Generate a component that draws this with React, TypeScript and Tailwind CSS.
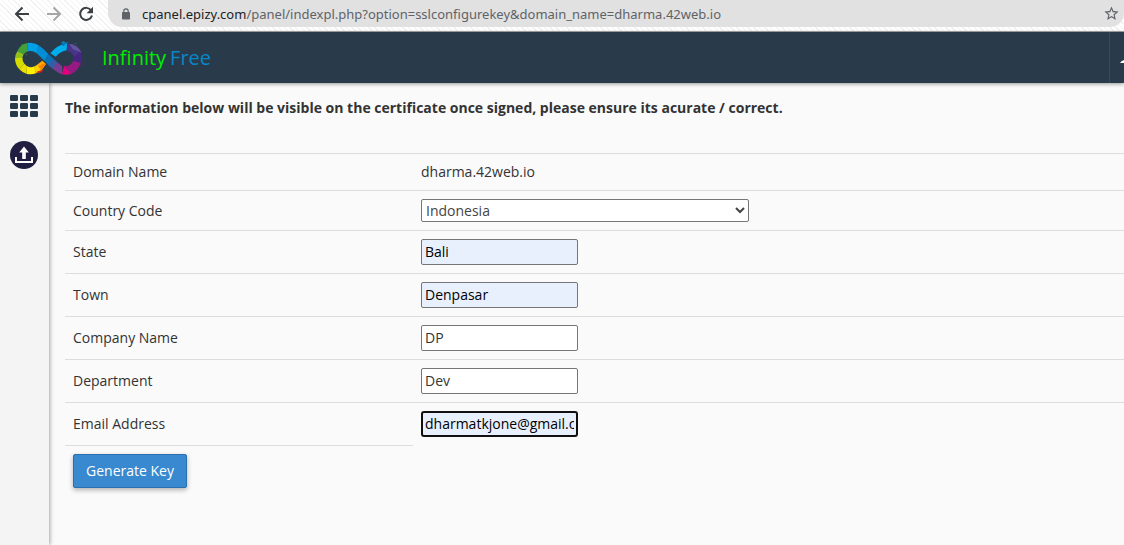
import type { ReactNode } from "react";

const cell = "border-t border-[#dddddd] p-2 font-normal text-left";

const inputBase =
  "block h-[26px] w-[157px] pb-0.5 text-sm outline-none";

const plain = "rounded-[2px] border border-[#767676] px-[3px]";

type Field = {
  id: string;
  label: string;
  value: string;
  look: string;
};

const fields: Field[] = [
  { id: "state", label: "State", value: "Bali", look: `${plain} bg-[#e8f0fe] text-black` },
  { id: "town", label: "Town", value: "Denpasar", look: `${plain} bg-[#e8f0fe] text-black` },
  { id: "company", label: "Company Name", value: "DP", look: `${plain} bg-white text-[#333333]` },
  { id: "department", label: "Department", value: "Dev", look: `${plain} bg-white text-[#333333]` },
  {
    id: "email",
    label: "Email Address",
    value: "dharmatkjone@gmail.com",
    look: "rounded-[3px] border-2 border-[#101010] bg-[#e8f0fe] px-0.5 text-black",
  },
];

function BackArrow() {
  return (
    <svg viewBox="0 0 16 16" className="size-4" fill="none" stroke="currentColor" strokeWidth="2">
      <path d="M15 8H2.5M8.5 1.5L2 8l6.500 6.500" />
    </svg>
  );
}

function ForwardArrow() {
  return (
    <svg viewBox="0 0 16 16" className="size-4" fill="none" stroke="currentColor" strokeWidth="2">
      <path d="M1 8h12.500M7.500 1.500L14 8l-6.500 6.500" />
    </svg>
  );
}

function ReloadIcon() {
  return (
    <svg viewBox="0 0 16 16" className="size-4" fill="none" stroke="currentColor" strokeWidth="2">
      <path d="M13.200 4.500A6 6 0 1 0 14 9.500" />
      <path d="M15 0.800v6.400H8.600z" fill="currentColor" stroke="none" />
    </svg>
  );
}

function LockIcon() {
  return (
    <svg viewBox="0 0 8 12" className="h-3 w-2" fill="none">
      <rect x="0" y="4" width="8" height="7.500" rx="0.800" fill="#5f6368" />
      <path d="M1.800 4.500V3a2.200 2.200 0 0 1 4.400 0v1.500" stroke="#5f6368" strokeWidth="1.200" />
    </svg>
  );
}

function StarIcon() {
  return (
    <svg viewBox="0 0 24 24" className="size-[17px]" fill="#5f6368">
      <path d="M22 9.240l-7.190-.620L12 2 9.190 8.630 2 9.240l5.460 4.730L5.820 21 12 17.270 18.180 21l-1.630-7.030L22 9.240zM12 15.400l-3.760 2.270 1-4.280-3.320-2.880 4.380-.380L12 6.100l1.710 4.040 4.380.380-3.320 2.880 1 4.280L12 15.400z" />
    </svg>
  );
}

function Logo() {
  return (
    <svg viewBox="42 27 219 108" className="h-9 w-[73px]" role="img" aria-label="InfinityFree logo">
      <path d="M82 36L84 61Q76 64 71 70L52 61Q60 40 82 36z" fill="#43a038" />
      <path d="M52 61L71 70Q67 77 67 84L45 84Q45 71 52 61z" fill="#93c120" />
      <path d="M45 82L67 80Q67 91 73 98L58 115Q45 102 45 82z" fill="#d4dc00" />
      <path d="M58 115L73 98L81 106L79 128Q66 124 58 115z" fill="#eae000" />
      <path d="M79 128L81 105Q92 112 103 106L108 127Q94 132 79 128z" fill="#fff000" />
      <path d="M102 107L112 101L126 116Q117 124 108 127z" fill="#ffd000" />
      <path d="M110 102L127 89L138 99L126 116z" fill="#ffa800" />
      <path d="M116 108L127 98L138 99L123 118z" fill="#f58200" />
      <path d="M108 124L116 120L130 116L126 122L118 126z" fill="#d42818" />
      <path d="M82 36Q101 33 116 43L110 67Q97 57 84 61z" fill="#00a0e6" />
      <path d="M116 43Q130 52 145 69L134 90L110 67z" fill="#008ed4" />
      <path d="M145 69L161 84L151 108L134 90z" fill="#0872b9" />
      <path d="M161 84L172 94L167 119Q158 115 145 102z" fill="#395ba6" />
      <path d="M172 94L186 105L187 130Q176 128 160 114z" fill="#7b3b92" />
      <path d="M192 105L213 108L214 129Q200 133 186 130z" fill="#e5007e" />
      <path d="M192 106Q210 108 220 89L244 89Q237 120 213 129z" fill="#951b82" />
      <path d="M220 89Q225 76 212 66L241 60Q249 75 244 97z" fill="#492583" />
      <path d="M201 61L203 38Q226 38 241 61L224 77Q216 62 201 61z" fill="#493487" />
      <path d="M207 38Q232 40 245 65L219 55z" fill="#6255a0" />
      <path d="M151 67Q171 40 201 38L200 58Q183 60 167 77z" fill="#00aeed" />
      <path d="M183 34l8-4 7 5 8-2-4 5-14 3zM225 35l5 3-6 1z" fill="#087eb4" />
      <path d="M183 39l13 1-5 5z" fill="#0868a4" />
      <path d="M244 101l7-3-4 6zM251 92l6-2-3 4z" fill="#791e75" />
      <path d="M65 39l5 3-4 2zM78 69l4 2-3 2z" fill="#529b36" />
    </svg>
  );
}

function GridIcon() {
  return (
    <svg viewBox="0 0 28 22" className="h-[22px] w-7" fill="#263a4a">
      {[0, 10, 20].map((x) =>
        [0, 8, 16].map((y) => <rect key={`${x}-${y}`} x={x} y={y} width="8" height="6" rx="1.300" />),
      )}
    </svg>
  );
}

function UploadIcon() {
  return (
    <svg viewBox="0 0 28 28" className="size-7">
      <circle cx="14" cy="14" r="14" fill="#201f42" />
      <path d="M14 5.500l4.800 6h-3v6.500h-3.600v-6.500h-3z" fill="#fff" />
      <path d="M6 16v5h16v-5" fill="none" stroke="#fff" strokeWidth="2" />
    </svg>
  );
}

function Row({ label, htmlFor, children }: { label: string; htmlFor?: string; children: ReactNode }) {
  return (
    <tr>
      <th scope="row" className={`${cell} w-[348px]`}>
        {htmlFor ? <label htmlFor={htmlFor}>{label}</label> : label}
      </th>
      <td className={cell}>{children}</td>
    </tr>
  );
}

export default function App() {
  return (
    <div className="flex min-h-screen flex-col overflow-x-clip bg-[#fafafa] font-['Open_Sans',sans-serif] text-sm leading-5 text-[#333333]">
      <div className="flex h-8 items-start border-b border-[#a8a8a8] bg-[repeating-linear-gradient(45deg,#ffffff_0px,#ffffff_3px,#f1f1f1_3px,#f1f1f1_4px)] pl-[14px]">
        <div className="flex h-[27px] items-center gap-4 text-[#3c4043]">
          <button type="button" aria-label="Back"><BackArrow /></button>
          <button type="button" aria-label="Forward" className="text-[#a6a6a6]"><ForwardArrow /></button>
          <button type="button" aria-label="Reload"><ReloadIcon /></button>
        </div>
        <div className="ml-[14px] flex h-[27px] min-w-0 flex-1 items-center rounded-b-[14px] bg-[#e1e1e1] pr-1 pl-[14px]">
          <LockIcon />
          <div className="ml-3 flex-1 truncate font-['Noto_Sans',sans-serif] text-[13px] text-[#5f6368]">
            <span className="text-[#202124]">cpanel.epizy.com</span>
            /panel/indexpl.php?option=sslconfigurekey&amp;domain_name=dharma.42web.io
          </div>
          <button type="button" aria-label="Bookmark this page"><StarIcon /></button>
        </div>
      </div>

      <header className="z-10 flex h-[51px] items-center justify-between bg-[#293a4a] pl-[14px] shadow-[0_1px_4px_rgba(0,0,0,0.4)]">
        <a href="#home" className="flex items-center gap-[15px]">
          <Logo />
          <span className="flex gap-1 text-xl">
            <span className="text-[#00ee00]">Infinity</span>
            <span className="text-[#0787c8]">Free</span>
          </span>
        </a>
        <button type="button" aria-label="Account" className="flex h-full w-[15px] items-center justify-end border-l border-[#3a4b5b]">
          <svg viewBox="0 0 4 12" className="h-3 w-1" fill="#fff"><path d="M4 8v3H0q1-2 4-3z" /></svg>
        </button>
      </header>

      <div className="flex flex-1">
        <nav className="flex w-[49px] shrink-0 flex-col items-start gap-6 bg-[#f4f4f4] pt-3 pl-[10px] shadow-[1px_0_4px_rgba(0,0,0,0.35)]">
          <a href="#apps" aria-label="Home"><GridIcon /></a>
          <a href="#upload" aria-label="Upload"><UploadIcon /></a>
        </nav>
        <main className="min-w-0 flex-1 pt-[15px] pl-4">
          <p className="font-bold">
            The information below will be visible on the certificate once signed, please ensure its acurate / correct.
          </p>
          <form className="mt-[35px]" onSubmit={(e) => e.preventDefault()}>
            <table className="w-full border-separate border-spacing-0">
              <tbody>
                <Row label="Domain Name">dharma.42web.io</Row>
                <Row label="Country Code" htmlFor="country">
                  <select
                    id="country"
                    defaultValue="Indonesia"
                    className="block h-[23px] w-[328px] rounded-[2px] border border-[#767676] bg-white text-[#444444]"
                  >
                    <option>Indonesia</option>
                  </select>
                </Row>
                {fields.map((f) => (
                  <Row key={f.id} label={f.label} htmlFor={f.id}>
                    <input id={f.id} type="text" defaultValue={f.value} className={`${inputBase} ${f.look}`} />
                  </Row>
                ))}
                <tr>
                  <td className={cell}>
                    <button
                      type="submit"
                      className="block h-[34px] rounded-[2px] border border-[#2a6fae] bg-[#3889cf] px-3 font-medium text-white shadow-[0_2px_5px_rgba(0,0,0,0.3)]"
                    >
                      Generate Key
                    </button>
                  </td>
                </tr>
              </tbody>
            </table>
          </form>
        </main>
      </div>
    </div>
  );
}
